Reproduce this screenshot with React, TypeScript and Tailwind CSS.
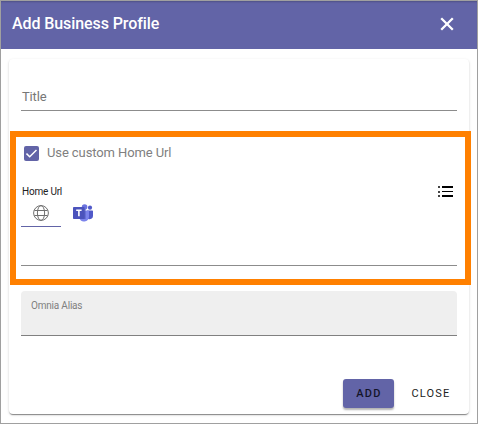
function CloseIcon() {
  return (
    <svg className="-mt-[3px]" width="14" height="14" viewBox="0 0 14 14" fill="none" stroke="#fff" strokeWidth="2.3">
      <path d="M1.2 1.2 12.8 12.8M12.8 1.2 1.2 12.8" />
    </svg>
  );
}

function GlobeIcon() {
  return (
    <svg width="16" height="16" viewBox="0 0 16 16" fill="none" stroke="#6f6f6f" strokeWidth="1">
      <circle cx="8" cy="8" r="7.4" />
      <ellipse cx="8" cy="8" rx="3.6" ry="7.4" />
      <path d="M1.4 5.5h13.2M1.4 10.5h13.2" />
    </svg>
  );
}

function TeamsIcon() {
  return (
    <svg width="20" height="18" viewBox="0 0 20 18">
      <circle cx="17" cy="3.7" r="2.1" fill="#5059c9" />
      <path d="M14 6.6h5.3a.7.7 0 0 1 .7.7v4.6a3.3 3.3 0 0 1-5 2.8z" fill="#5059c9" />
      <circle cx="11.6" cy="3" r="2.8" fill="#6b73df" />
      <path d="M7 6.6h8.2a.8.8 0 0 1 .8.8v5.4a5 5 0 0 1-9.8 1z" fill="#7b83eb" />
      <rect x="9" y="5" width="3.6" height="10" fill="#3f48ad" opacity=".55" />
      <rect x="0" y="3" width="11.6" height="12" rx=".8" fill="#4b53bc" />
      <path d="M3.2 6.3h5.4M5.9 6.3v6" stroke="#fff" strokeWidth="1.6" fill="none" />
    </svg>
  );
}

function ListIcon() {
  return (
    <svg width="15" height="12" viewBox="0 0 15 12" shapeRendering="crispEdges">
      <path d="M0 0h2v2H0zM0 5h2v2H0zM0 9h2v2H0z" fill="#444" />
      <path d="M4 0h11v2H4zM4 5h11v1H4zM4 9h11v2H4z" fill="#000" />
    </svg>
  );
}

export default function App() {
  return (
    <div className="flex h-[424px] w-[478px] flex-col border border-[#a0a0a0] bg-white font-[Roboto,sans-serif]">
      <header className="flex h-12 shrink-0 items-center justify-between bg-[#6264a7] pr-[23px] pl-[11px] text-white shadow-[inset_0_2px_2px_-1px_rgba(0,0,0,0.2)]">
        <h1 className="-mt-[3px] text-[16px] leading-6 font-medium tracking-[-0.09px]">Add Business Profile</h1>
        <CloseIcon />
      </header>

      <main className="mt-[10px] ml-2 flex h-[355px] w-[460px] shrink-0 flex-col rounded-[4px] bg-white shadow-[0_2px_1px_-1px_rgba(0,0,0,0.3),0_1px_1px_rgba(0,0,0,0.16),0_1px_3px_rgba(0,0,0,0.14)]">
        <div className="mx-3 flex h-[52px] shrink-0 flex-col justify-end border-b border-[#8c8c8c] pb-[3px] pl-px text-[13px] leading-5 tracking-[-0.15px] text-[#777]">
          Title
        </div>

        <section className="mt-5 ml-px h-[154px] w-[461px] shrink-0 border-[6px] border-[#ff8000] pr-2 pl-[5px]">
          <label className="mt-[6px] ml-[3px] flex h-5 items-center gap-2 text-[13px] tracking-[-0.1px] text-[#808080]">
            <span className="flex size-[15px] items-center justify-center rounded-[2px] bg-[#6264a7]">
              <svg width="11" height="9" viewBox="0 0 11 9" fill="none" stroke="#fff" strokeWidth="1.5">
                <path d="m.5 4.6 3.2 3.1L10.5 1" />
              </svg>
            </span>
            Use custom Home Url
          </label>
          <div className="mt-[22px] ml-px flex h-[14px] items-start justify-between pr-1">
            <span className="text-[10px] leading-[14px] tracking-[-0.2px] text-[#222]">Home Url</span>
            <span className="pt-[1px]"><ListIcon /></span>
          </div>
          <div className="flex h-7">
            <div className="flex w-10 justify-center border-b border-[#6264a7] pt-[6px]">
              <GlobeIcon />
            </div>
            <div className="flex w-11 justify-center pt-[5px]">
              <TeamsIcon />
            </div>
          </div>
          <div className="h-[39px] border-b border-[#8c8c8c]" />
        </section>

        <div className="mx-3 mt-[6px] h-[45px] shrink-0 rounded-t-[4px] border-b border-[#808080] bg-[#efefef] pt-2 pl-[10px] text-[10px] leading-[14px] tracking-[-0.2px] text-[#808080]">
          Omnia Alias
        </div>

        <footer className="mt-[43px] flex h-[29px] justify-end pr-[6px] text-[11px] font-medium tracking-[1.2px] text-[#222]">
          <button className="w-[51px] rounded-[3px] bg-[#6264a7] pt-px pl-px text-[#14142a] shadow-[0_2px_2px_rgba(0,0,0,0.3)]">ADD</button>
          <button className="ml-[5px] w-16 pt-px font-normal">CLOSE</button>
        </footer>
      </main>
    </div>
  );
}
